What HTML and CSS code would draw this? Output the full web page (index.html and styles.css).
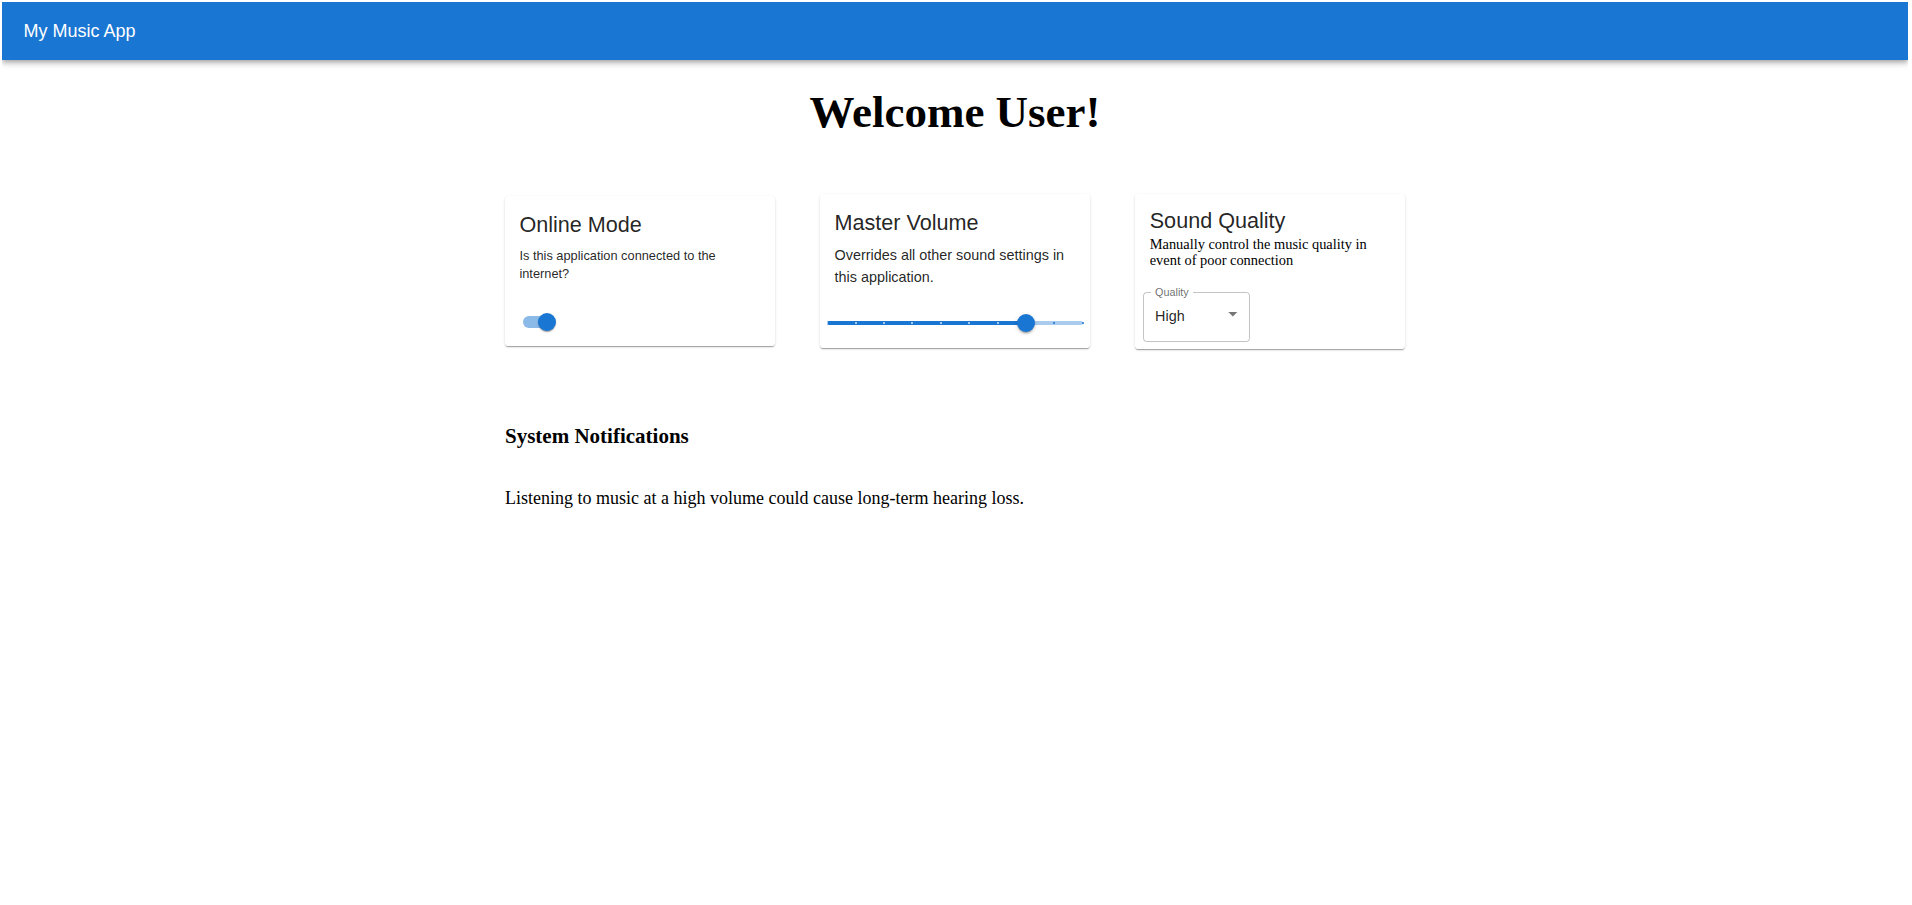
FILE: index.html
```html
<!DOCTYPE html>
<html lang="en">
<head>
<meta charset="utf-8">
<title>My Music App</title>
<link rel="stylesheet" href="styles.css">
</head>
<body>
<header class="appbar">
  <div class="appbar-title">My Music App</div>
</header>
<main class="page">
  <h1 class="welcome">Welcome User!</h1>
  <section class="cards">
    <div class="card card-online">
      <div class="card-content">
        <div class="card-title gutter">Online Mode</div>
        <p class="card-desc-small">Is this application connected to the internet?</p>
      </div>
      <div class="card-actions">
        <span class="switch">
          <span class="switch-track"></span>
          <span class="switch-thumb"></span>
        </span>
      </div>
    </div>

    <div class="card card-volume">
      <div class="card-content">
        <div class="card-title gutter">Master Volume</div>
        <p class="card-desc">Overrides all other sound settings in this application.</p>
      </div>
      <div class="card-actions slider-actions">
        <span class="slider">
          <span class="slider-rail"></span>
          <span class="slider-track" style="width: 77.78%"></span>
          <span class="slider-marks">
            <span class="mark active"></span><span class="mark active"></span><span class="mark active"></span><span class="mark active"></span><span class="mark active"></span><span class="mark active"></span><span class="mark active"></span><span class="mark active"></span><span class="mark"></span><span class="mark"></span>
          </span>
          <span class="slider-thumb" style="left: 77.78%"></span>
        </span>
      </div>
    </div>

    <div class="card card-quality">
      <div class="card-content quality-content">
        <div class="card-title">Sound Quality</div>
        <p class="card-desc-serif">Manually control the music quality in event of poor connection</p>
      </div>
      <div class="card-actions quality-actions">
        <div class="select">
          <span class="select-label">Quality</span>
          <span class="select-value">High</span>
          <svg class="select-arrow" viewBox="0 0 24 24" aria-hidden="true"><path d="M7 10l5 5 5-5z"></path></svg>
        </div>
      </div>
    </div>
  </section>

  <h2 class="notif-title">System Notifications</h2>
  <p class="notif-text">Listening to music at a high volume could cause long-term hearing loss.</p>
</main>
</body>
</html>
```

FILE: styles.css
```css
html, body {
  background: #fff;
}

body {
  margin: 2px 4px 0 2px;
  font-family: "Liberation Serif", "Times New Roman", serif;
  color: #000;
}

.appbar {
  height: 58px;
  background: #1976d2;
  color: #fff;
  display: flex;
  align-items: center;
  padding: 0 21.6px;
  box-shadow: 0 2px 4px -1px rgba(0,0,0,0.2), 0 4px 5px 0 rgba(0,0,0,0.14), 0 1px 10px 0 rgba(0,0,0,0.12);
}

.appbar-title {
  font-family: "Liberation Sans", Arial, sans-serif;
  font-size: 18px;
  line-height: 1.6;
  font-weight: 400;
}

.page {
  width: 900px;
  margin: 0 auto;
}

.welcome {
  margin: 27px 0 0;
  font-size: 45px;
  font-weight: 700;
  line-height: 50px;
  text-align: center;
}

.cards {
  margin-top: 56.5px;
  display: grid;
  grid-template-columns: repeat(3, 1fr);
  column-gap: 45.5px;
  align-items: center;
}

.card {
  background: #fff;
  border-radius: 3.6px;
  box-shadow: 0 2px 1px -1px rgba(0,0,0,0.2), 0 1px 1px 0 rgba(0,0,0,0.14), 0 1px 3px 0 rgba(0,0,0,0.12);
  color: rgba(0,0,0,0.87);
  font-family: "Liberation Sans", Arial, sans-serif;
  overflow: hidden;
}

.card-content {
  padding: 14.4px 14.4px 21.6px;
}

.card-title {
  font-size: 21.6px;
  line-height: 28.8px;
  font-weight: 400;
}

.card-title.gutter {
  margin-bottom: 7.56px;
}

.card-desc-small {
  margin: 0;
  font-size: 12.8px;
  line-height: 18px;
}

.card-desc {
  margin: 0;
  font-size: 14.4px;
  line-height: 21.6px;
}

.card-desc-serif {
  margin: 0;
  font-family: "Liberation Serif", "Times New Roman", serif;
  font-size: 14.4px;
  line-height: 16px;
  color: #000;
}

.card-actions {
  padding: 0 7.2px 7.2px;
  display: flex;
  align-items: center;
}

/* Switch */
.switch {
  position: relative;
  display: inline-block;
  width: 52.2px;
  height: 34.2px;
  padding: 10.8px;
  box-sizing: border-box;
}

.switch-track {
  display: block;
  width: 100%;
  height: 100%;
  border-radius: 7px;
  background: #1976d2;
  opacity: 0.5;
}

.switch-thumb {
  position: absolute;
  top: 8.1px;
  left: 26.1px;
  width: 18px;
  height: 18px;
  border-radius: 50%;
  background: #1976d2;
  box-shadow: 0 2px 1px -1px rgba(0,0,0,0.2), 0 1px 1px 0 rgba(0,0,0,0.14), 0 1px 3px 0 rgba(0,0,0,0.12);
}

/* Slider */
.slider-actions {
  padding: 0 7.2px 11.4px;
}

.slider {
  position: relative;
  display: block;
  width: 100%;
  height: 4px;
  padding: 11.5px 0;
}

.slider-rail {
  position: absolute;
  left: 0;
  right: 0;
  top: 11.5px;
  height: 4px;
  border-radius: 2px;
  background: #1976d2;
  opacity: 0.38;
}

.slider-track {
  position: absolute;
  left: 0;
  top: 11.5px;
  height: 4px;
  border-radius: 2px;
  background: #1976d2;
}

.slider-marks {
  position: absolute;
  left: -1px;
  right: -1px;
  top: 12.5px;
  height: 2px;
  display: flex;
  justify-content: space-between;
}

.mark {
  width: 2px;
  height: 2px;
  border-radius: 1px;
  background: #1976d2;
}

.mark.active {
  background: #fff;
  opacity: 0.8;
}

.slider-thumb {
  position: absolute;
  top: 13.5px;
  width: 18px;
  height: 18px;
  margin: -9px 0 0 -9px;
  border-radius: 50%;
  background: #1976d2;
  box-shadow: 0 3px 1px -2px rgba(0,0,0,0.2), 0 2px 2px 0 rgba(0,0,0,0.14), 0 1px 5px 0 rgba(0,0,0,0.12);
}

/* Select */
.card-quality .card-content {
  padding-top: 13.4px;
}

.quality-content {
  padding-bottom: 24px;
}

.quality-actions {
  padding: 0 7.2px 7.3px;
}

.select {
  position: relative;
  width: 107px;
  height: 50px;
  box-sizing: border-box;
  border: 1px solid rgba(0,0,0,0.23);
  border-radius: 3.6px;
  display: flex;
  align-items: center;
  padding: 0 5.3px 2px 11.6px;
}

.select-label {
  position: absolute;
  top: -7px;
  left: 7.1px;
  padding: 0 4.5px;
  background: #fff;
  font-size: 10.8px;
  line-height: 12px;
  color: rgba(0,0,0,0.6);
}

.select-value {
  font-size: 14.4px;
  line-height: normal;
  color: rgba(0,0,0,0.87);
}

.select-arrow {
  width: 21.6px;
  height: 21.6px;
  margin-left: auto;
  margin-bottom: 4px;
  fill: rgba(0,0,0,0.54);
}

/* Notifications */
.notif-title {
  margin: 76px 0 0;
  font-size: 21px;
  font-weight: 700;
  line-height: 23px;
}

.notif-text {
  margin: 40.5px 0 0;
  font-size: 18px;
  line-height: 20px;
}
```
